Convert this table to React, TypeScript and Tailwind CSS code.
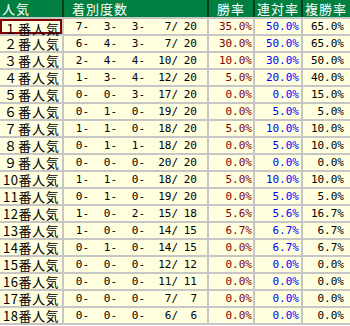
const ROWS: [string, number[], number, string, string, string][] = [
  ['１番人気', [7, 3, 3, 7], 20, '35.0%', '50.0%', '65.0%'],
  ['２番人気', [6, 4, 3, 7], 20, '30.0%', '50.0%', '65.0%'],
  ['３番人気', [2, 4, 4, 10], 20, '10.0%', '30.0%', '50.0%'],
  ['４番人気', [1, 3, 4, 12], 20, '5.0%', '20.0%', '40.0%'],
  ['５番人気', [0, 0, 3, 17], 20, '0.0%', '0.0%', '15.0%'],
  ['６番人気', [0, 1, 0, 19], 20, '0.0%', '5.0%', '5.0%'],
  ['７番人気', [1, 1, 0, 18], 20, '5.0%', '10.0%', '10.0%'],
  ['８番人気', [0, 1, 1, 18], 20, '0.0%', '5.0%', '10.0%'],
  ['９番人気', [0, 0, 0, 20], 20, '0.0%', '0.0%', '0.0%'],
  ['10番人気', [1, 1, 0, 18], 20, '5.0%', '10.0%', '10.0%'],
  ['11番人気', [0, 1, 0, 19], 20, '0.0%', '5.0%', '5.0%'],
  ['12番人気', [1, 0, 2, 15], 18, '5.6%', '5.6%', '16.7%'],
  ['13番人気', [1, 0, 0, 14], 15, '6.7%', '6.7%', '6.7%'],
  ['14番人気', [0, 1, 0, 14], 15, '0.0%', '6.7%', '6.7%'],
  ['15番人気', [0, 0, 0, 12], 12, '0.0%', '0.0%', '0.0%'],
  ['16番人気', [0, 0, 0, 11], 11, '0.0%', '0.0%', '0.0%'],
  ['17番人気', [0, 0, 0, 7], 7, '0.0%', '0.0%', '0.0%'],
  ['18番人気', [0, 0, 0, 6], 6, '0.0%', '0.0%', '0.0%'],
];

const jp = "font-['Noto_Sans_CJK_JP',sans-serif]";
const mono = "font-['DejaVu_Sans_Mono',monospace] text-[11px]";
const cols = 'grid grid-cols-[62px_143px_44px_46px_47px] gap-x-[2px]';

export default function App() {
  return (
    <div className={`w-[350px] bg-white ${jp}`}>
      {/* 見出し */}
      <div className={`${cols} h-[17px] bg-[#003f1f] text-white text-[13px] tracking-[1px] leading-[17px]`}>
        <div className="bg-[#008040] pl-[2px]">人気</div>
        <div className="bg-[#008040] pl-[8px]">着別度数</div>
        <div className="bg-[#008040] text-center">勝率</div>
        <div className="bg-[#008040] text-center">連対率</div>
        <div className="bg-[#008040] pl-[2px]">複勝率</div>
      </div>

      {/* 各人気の成績 */}
      <div className={`${cols} gap-y-[2px] bg-[#c6c6c6] py-[2px]`}>
        {ROWS.map(([label, counts, total, win, ren, fuku], i) => (
          <div key={label} className="contents">
            <div
              className={`h-[15px] bg-[#ffffe0] text-[13px] leading-[15px] text-black whitespace-nowrap ${
                i === 0
                  ? 'border-2 border-[#800000] pl-[2px] tracking-[1px] leading-[11px]'
                  : i >= 9
                    ? 'pl-[3px] tracking-[0.5px]'
                    : 'pl-[4px] tracking-[1px]'
              }`}
            >
              {label}
            </div>
            <div className={`h-[15px] bg-[#ffffe0] flex leading-[15px] text-black ${mono}`}>
              <span className="w-[25px] text-right">{counts[0]}-</span>
              <span className="w-[28px] text-right">{counts[1]}-</span>
              <span className="w-[28px] text-right">{counts[2]}-</span>
              <span className="w-[33px] text-right">{counts[3]}/</span>
              <span className="w-[19px] text-right">{total}</span>
            </div>
            <div className={`h-[15px] bg-[#ffffe0] text-right pr-[1px] leading-[15px] text-[#800000] ${mono}`}>
              {win}
            </div>
            <div className={`h-[15px] bg-[#ffffe0] text-right pr-[2px] leading-[15px] text-[#0000ff] ${mono}`}>
              {ren}
            </div>
            <div className={`h-[15px] bg-[#ffffe0] text-right pr-[6px] leading-[15px] text-black ${mono}`}>
              {fuku}
            </div>
          </div>
        ))}
      </div>
    </div>
  );
}
